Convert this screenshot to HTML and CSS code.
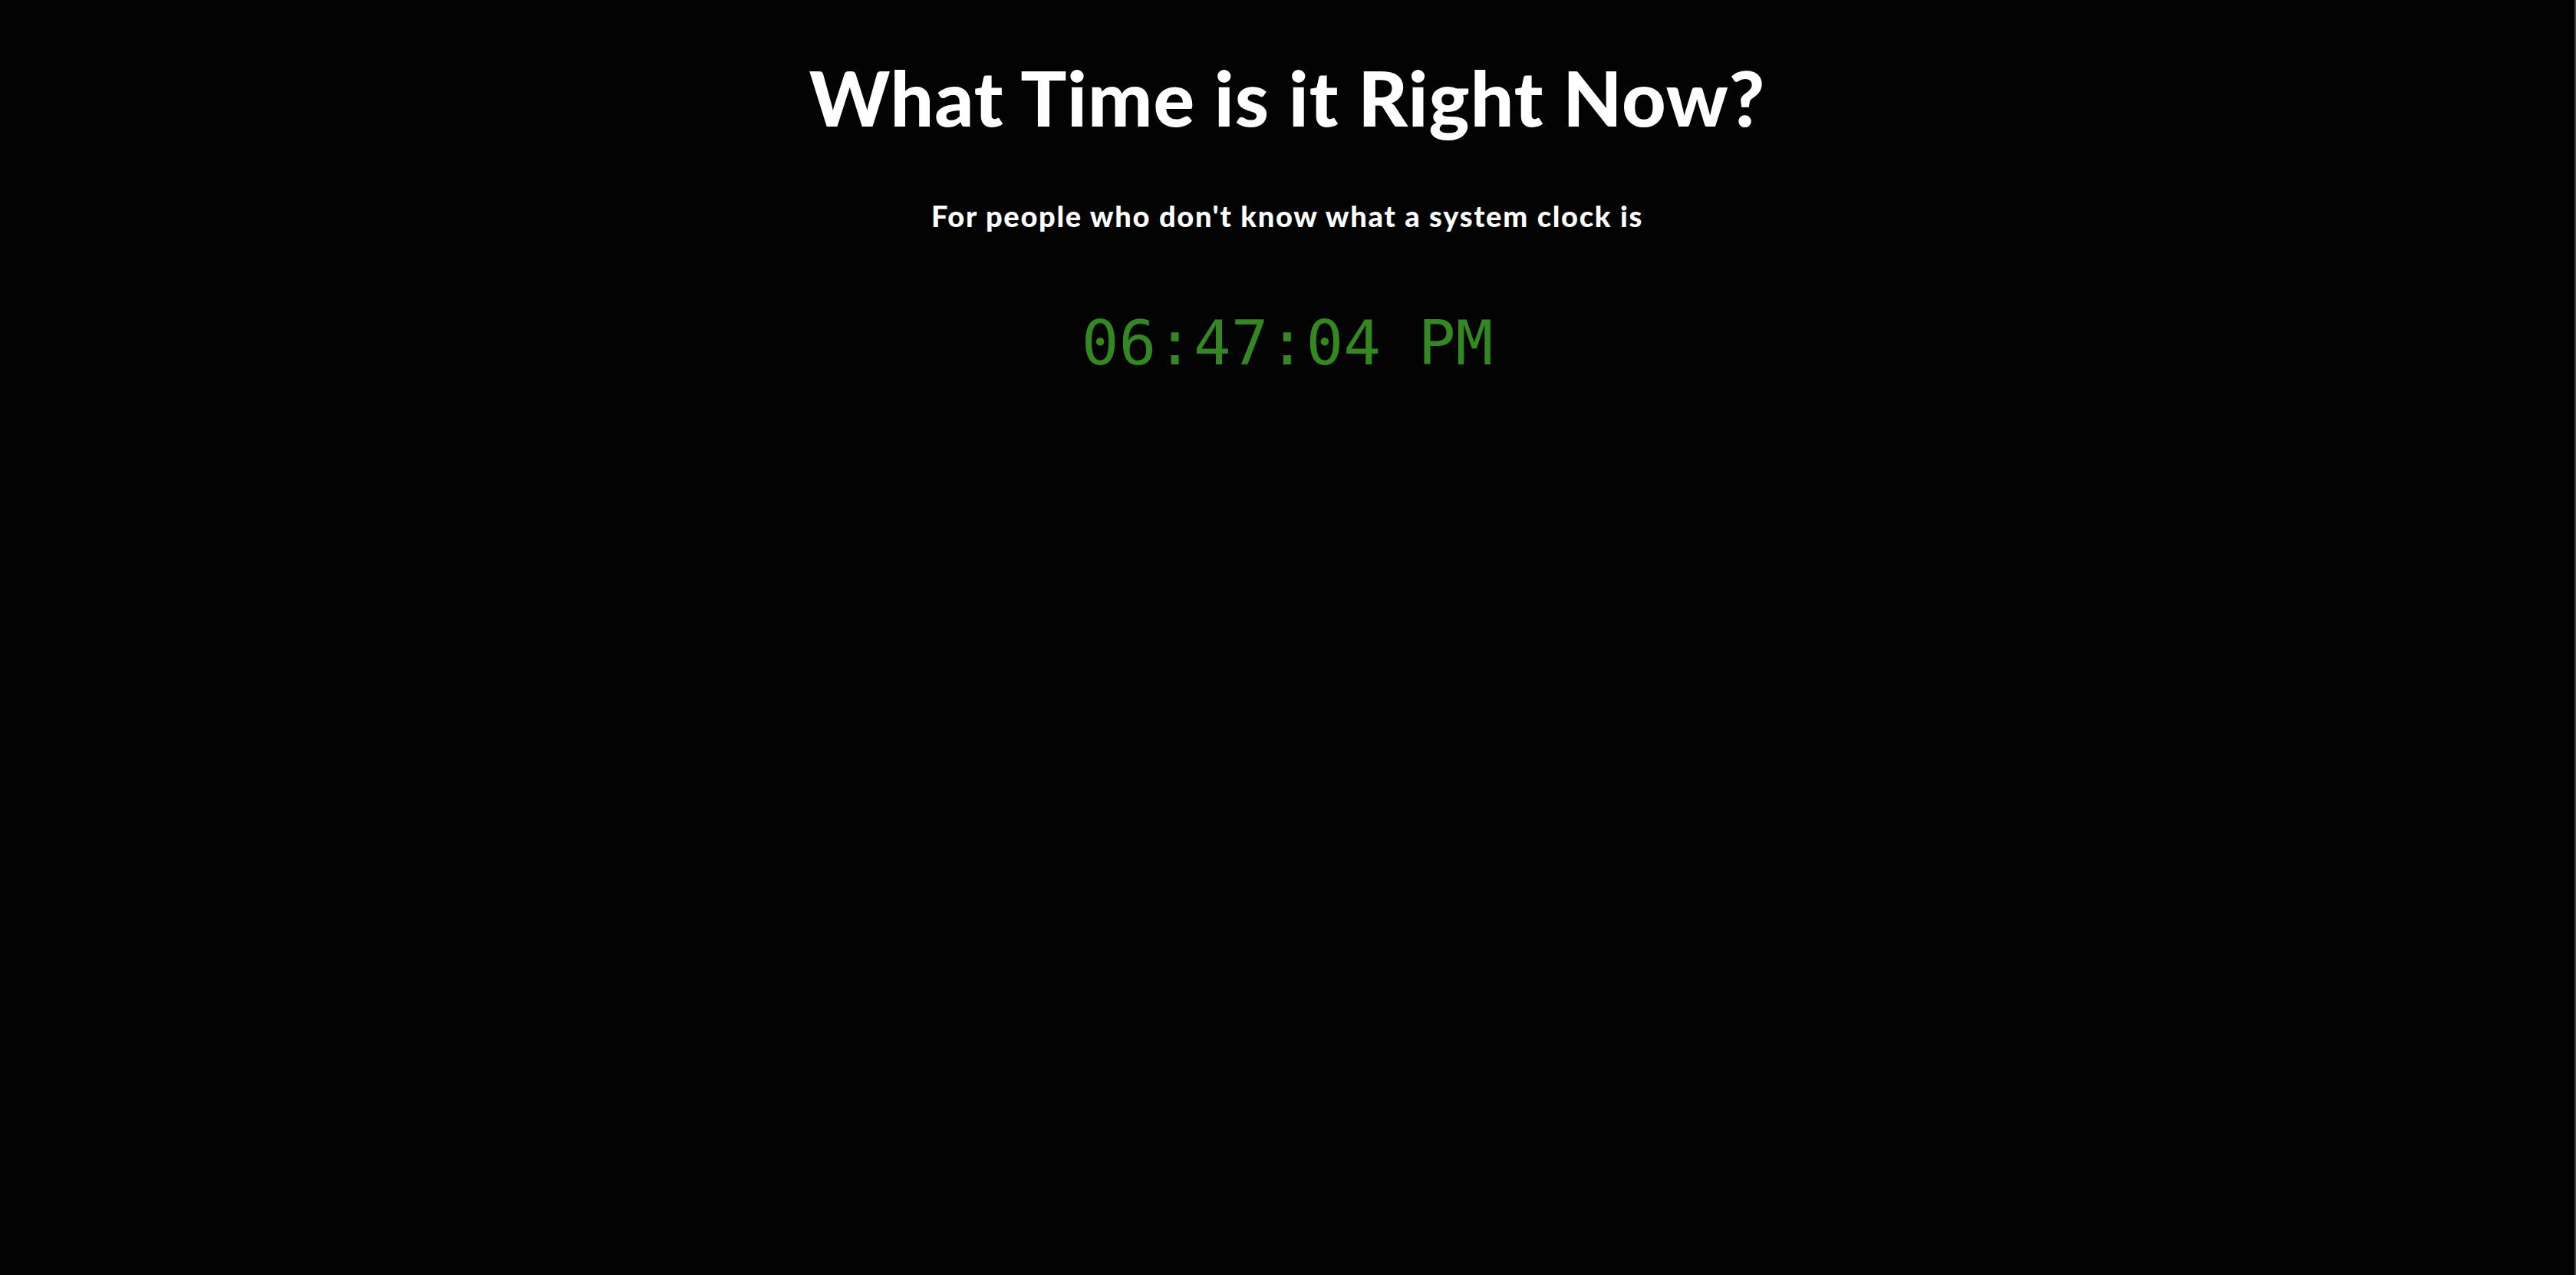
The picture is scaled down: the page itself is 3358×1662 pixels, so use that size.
FILE: index.html
```html
<!DOCTYPE html>
<html lang="en">
<head>
<meta charset="utf-8">
<title>What Time is it Right Now?</title>
<link rel="stylesheet" href="styles.css">
</head>
<body>
<main class="page">
  <h1 class="title">What Time is it Right Now?</h1>
  <p class="subtitle">For people who don't know what a system clock is</p>
  <div class="clock">06:47:04 PM</div>
</main>
</body>
</html>
```

FILE: styles.css
```css
html, body {
  margin: 0;
  padding: 0;
  height: 100%;
  background: #030303;
}
body {
  border-right: 2px solid #444;
  box-sizing: border-box;
}
.page {
  display: flex;
  flex-direction: column;
  align-items: center;
  text-align: center;
  color: #fff;
  font-family: "Lato", "Open Sans", sans-serif;
}
.title {
  margin: 0;
  padding-top: 66px;
  font-size: 100px;
  line-height: 120px;
  font-weight: 900;
  letter-spacing: 1px;
}
.subtitle {
  margin: 0;
  padding-top: 72px;
  font-size: 38px;
  line-height: 46px;
  font-weight: 900;
  letter-spacing: 1.7px;
}
.clock {
  margin-top: 95px;
  font-family: "DejaVu Sans Mono", monospace;
  font-size: 81px;
  line-height: 96px;
  color: #338822;
}
```
